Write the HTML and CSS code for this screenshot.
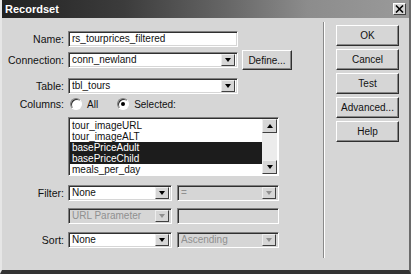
FILE: index.html
```html
<!DOCTYPE html>
<html lang="en">
<head>
	<meta charset="UTF-8">
	<title>Recordset</title>
	<link rel="stylesheet" href="styles.css">
</head>
<body>
	<div class="window">
		<div class="titlebar">
			<span class="title">Recordset</span>
			<span class="close">
				<svg width="9" height="8" viewBox="0 0 9 8"><path d="M1 0.5L8 7.5M8 0.5L1 7.5" stroke="#000" stroke-width="1.6"/></svg>
			</span>
		</div>
		<div class="client">
			<div class="form">
				<div class="row r-name">
					<label>Name:</label>
					<div class="field w170">rs_tourprices_filtered</div>
				</div>
				<div class="row r-conn">
					<label>Connection:</label>
					<div class="select w170"><span class="val">conn_newland</span><span class="arrow"></span></div>
					<div class="btn define">Define...</div>
				</div>
				<div class="row r-table">
					<label>Table:</label>
					<div class="select w170"><span class="val">tbl_tours</span><span class="arrow"></span></div>
				</div>
				<div class="row r-cols">
					<label>Columns:</label>
					<span class="radio"></span><span class="opt">All</span>
					<span class="radio on"></span><span class="opt">Selected:</span>
				</div>
				<div class="row r-list">
					<label></label>
					<div class="listbox">
						<ul>
							<li>tour_imageURL</li>
							<li>tour_imageALT</li>
							<li class="sel">basePriceAdult</li>
							<li class="sel">basePriceChild</li>
							<li>meals_per_day</li>
						</ul>
						<div class="scroll">
							<span class="sb up"></span>
							<span class="track"></span>
							<span class="sb down"></span>
						</div>
					</div>
				</div>
				<div class="row r-filter">
					<label>Filter:</label>
					<div class="select w104"><span class="val">None</span><span class="arrow"></span></div>
					<div class="select w102 off"><span class="val">=</span><span class="arrow"></span></div>
				</div>
				<div class="row r-param">
					<label></label>
					<div class="select w104 off"><span class="val">URL Parameter</span><span class="arrow"></span></div>
					<div class="field w102 off"></div>
				</div>
				<div class="row r-sort">
					<label>Sort:</label>
					<div class="select w104"><span class="val">None</span><span class="arrow"></span></div>
					<div class="select w102 off"><span class="val">Ascending</span><span class="arrow"></span></div>
				</div>
			</div>
			<div class="sep"></div>
			<div class="buttons">
				<div class="btn">OK</div>
				<div class="btn">Cancel</div>
				<div class="btn">Test</div>
				<div class="btn">Advanced...</div>
				<div class="btn">Help</div>
			</div>
		</div>
	</div>
</body>
</html>
```

FILE: styles.css
```css
*{box-sizing:border-box;}
body{margin:0;background:#d6d6d6;font:10px "Liberation Sans",Arial,sans-serif;color:#111;}
ul{list-style:none;margin:0;padding:0;}

.window{width:411px;height:274px;display:flex;flex-direction:column;background:#d6d6d6;border-left:2px solid #e6e6e6;border-right:2px solid #6a6a6a;border-bottom:4px solid #333;}

.titlebar{height:18px;display:flex;align-items:center;padding-left:3px;background:linear-gradient(to right,#222,#3c3c3c 30%,#666 55%,#8c8c8c 75%,#9a9a9a);}
.titlebar .title{color:#fff;font-weight:bold;font-size:11px;}
.titlebar .close{margin-left:auto;margin-right:3px;width:13px;height:12px;display:flex;align-items:center;justify-content:center;background:#d6d6d6;border:1px solid;border-color:#fff #404040 #404040 #fff;}

.client{flex:1;display:flex;}
.form{width:321px;padding-top:13px;}
.sep{width:2px;margin:4px 0 12px;border-left:1px solid #8a8a8a;border-right:1px solid #fff;}
.buttons{display:flex;flex-direction:column;gap:3px;padding:7px 0 0 11px;}

.row{display:flex;align-items:center;}
.row label{width:66px;padding-right:4px;text-align:right;font-size:10.5px;}
.r-conn{height:20px;margin-top:3px;}
.r-table{margin-top:8px;}
.r-cols{height:14px;margin-top:3px;}
.r-list{margin-top:6px;}
.r-filter{margin-top:9px;}
.r-param{margin-top:7px;}
.r-sort{margin-top:8px;}
.r-filter .select + .select,.r-param .select + .field,.r-sort .select + .select{margin-left:5px;}

.w170{width:170px;}
.w104{width:104px;}
.w102{width:102px;}

.field,.select{height:16px;background:#fff;border:1px solid;border-color:#808080 #fff #fff #808080;box-shadow:inset 1px 1px #303030,inset -1px -1px #d6d6d6;line-height:14px;padding-left:3px;white-space:nowrap;overflow:hidden;}
.select{display:flex;padding-right:2px;}
.select .val{flex:1;overflow:hidden;}
.select .arrow{width:14px;height:12px;margin-top:1px;display:flex;align-items:center;justify-content:center;background:#d6d6d6;border:1px solid;border-color:#eee #404040 #404040 #eee;}
.select .arrow:after{content:"";border-top:4px solid #000;border-left:3px solid transparent;border-right:3px solid transparent;}
.off{background:#d6d6d6;color:#909090;}
.off .arrow:after{border-top-color:#909090;}

.btn{height:21px;display:flex;align-items:center;justify-content:center;background:#d6d6d6;border:1px solid;border-color:#fff #303030 #303030 #fff;box-shadow:inset -1px -1px #888;}
.buttons .btn{width:63px;}
.define{width:50px;height:20px;margin-left:4px;}

.radio{width:12px;height:12px;border-radius:50%;margin-left:2px;background:#fff;border:1px solid;border-color:#808080 #fff #fff #808080;box-shadow:inset 1px 1px #303030;display:flex;align-items:center;justify-content:center;}
.radio.on:after{content:"";width:4px;height:4px;border-radius:50%;background:#000;}
.opt{margin-left:5px;margin-right:17px;}

.listbox{width:211px;height:59px;display:flex;background:#fff;border:1px solid;border-color:#808080 #fff #fff #808080;box-shadow:inset 1px 1px #303030;padding:1px;}
.listbox ul{flex:1;padding-top:1px;}
.listbox li{height:11px;line-height:11px;padding-left:2px;}
.listbox li.sel{background:#1c1c1c;color:#fff;}
.scroll{width:15px;display:flex;flex-direction:column;background:#ececec;}
.scroll .track{flex:1;}
.scroll .sb{height:14px;display:flex;align-items:center;justify-content:center;background:#d6d6d6;border:1px solid;border-color:#eee #404040 #404040 #eee;}
.scroll .up:after{content:"";border-bottom:4px solid #000;border-left:3px solid transparent;border-right:3px solid transparent;}
.scroll .down:after{content:"";border-top:4px solid #000;border-left:3px solid transparent;border-right:3px solid transparent;}
```
